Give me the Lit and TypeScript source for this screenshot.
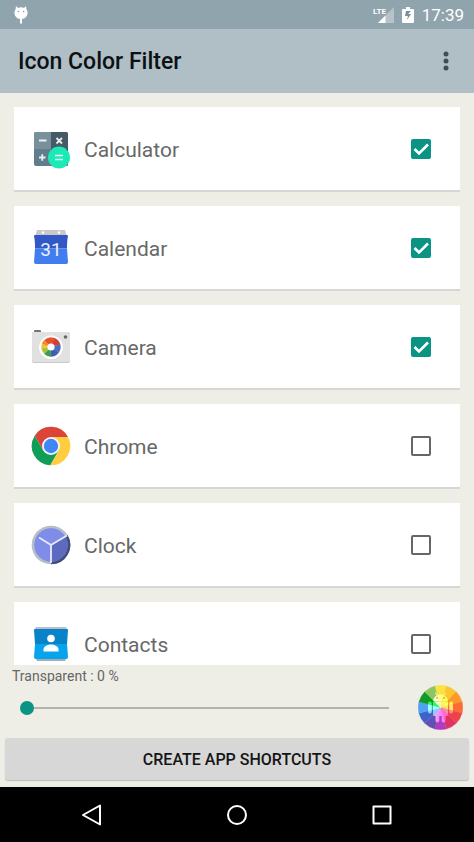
import { LitElement, html, svg, css, type TemplateResult } from "lit";
import { customElement, property, state } from "lit/decorators.js";

interface AppEntry {
  name: string;
  selected: boolean;
}

const wheelColors = [
  "#fde33f", "#fdc62f", "#fd9a27", "#fb6b33", "#ef4149", "#e0335f",
  "#ae3cc0", "#6450b4", "#3f62c8", "#4fa2f2", "#129a26", "#8cc663",
];

// Start angle, end angle and colour of each part of the camera lens.
const lensParts: [number, number, string][] = [
  [-45, 20, "#e8502c"], [20, 75, "#d23f35"], [75, 125, "#4a6fc0"], [125, 185, "#3f5fae"],
  [185, 225, "#3c9b4d"], [225, 262, "#a9c23c"], [262, 290, "#f6c330"], [290, 315, "#f08a2c"],
];

const point = (radius: number, degrees: number) => {
  const a = (degrees * Math.PI) / 180;
  return `${(radius * Math.sin(a)).toFixed(2)} ${(-radius * Math.cos(a)).toFixed(2)}`;
};

const wedge = (radius: number, from: number, to: number, color: string) =>
  svg`<path fill=${color} stroke=${color} stroke-width="0.300" d="M0 0L${point(radius, from)}A${radius} ${radius} 0 0 1 ${point(radius, to)}Z"/>`;

const icons: Record<string, TemplateResult> = {
  Calculator: svg`
    <rect x="3" y="3" width="34" height="34" rx="2" fill="#607d8b"/>
    <path d="M5 3H20V20H3V5A2 2 0 0 1 5 3Z" fill="#78909c"/>
    <path d="M20 3H35A2 2 0 0 1 37 5V20H20Z" fill="#455a64"/>
    <path d="M20 20H37V35A2 2 0 0 1 35 37H20Z" fill="#37474f"/>
    <path d="M8 11.500H15.500M8 28.500H14.500M11.250 25.250V31.750M25.500 9L31 14.500M31 9L25.500 14.500" stroke="#eceff1" stroke-width="1.800" fill="none"/>
    <circle cx="28" cy="28.500" r="11" fill="#1de9b6"/>
    <path d="M24 26.500H32M24 30.500H32" stroke="#d9fff5" stroke-width="1.500"/>`,
  Calendar: svg`
    <path d="M6 2H34L36 9H4Z" fill="#c8c8c8"/>
    <circle cx="12" cy="4.500" r="1.300" fill="#fff"/><circle cx="28" cy="4.500" r="1.300" fill="#fff"/>
    <path d="M3 8A1 1 0 0 1 4 7H36A1 1 0 0 1 37 8C36 13 36 17 36 20.500H4C4 17 4 13 3 8Z" fill="#3158c6"/>
    <path d="M4 20.500H36L37 34A2 2 0 0 1 35 36H5A2 2 0 0 1 3 34Z" fill="#427df0"/>
    <text x="20" y="28" text-anchor="middle" font-size="19" fill="#e9f0ff">31</text>`,
  Camera: svg`
    <path d="M4 3H9A1 1 0 0 1 10 4V7H3V4A1 1 0 0 1 4 3Z" fill="#757575"/>
    <rect x="1" y="5" width="38" height="31" rx="2" fill="#cacaca"/>
    <rect x="1" y="5" width="38" height="30" rx="2" fill="#e1e1e1"/>
    <circle cx="34.500" cy="10" r="1.800" fill="#666"/>
    <circle cx="20" cy="21" r="12" fill="#cfcfcf"/>
    <circle cx="20" cy="20.500" r="12" fill="#fff"/>
    <g transform="translate(20 20)">
      ${lensParts.map(([from, to, color]) => wedge(9.5, from, to, color))}
      <circle r="3.600" fill="#fff"/>
    </g>`,
  Chrome: svg`
    <g transform="translate(20 20)">
      <path d="M-16.300 -10.200A19.200 19.200 0 0 1 17 -9H0L-7.800 4.500Z" fill="#db4437"/>
      <path d="M-16.300 -10.200A19.200 19.200 0 0 0 -0.700 19.200L7.800 4.500L-7.800 4.500Z" fill="#0f9d58"/>
      <path d="M17 -9A19.200 19.200 0 0 1 -0.700 19.200L7.800 4.500L0 -9Z" fill="#ffcd40"/>
      <circle r="9" fill="#f4f6f8"/><circle r="7.200" fill="#4285f4"/>
    </g>`,
  Clock: svg`
    <circle cx="20" cy="20" r="19.300" fill="#b4bfc8"/>
    <path d="M36.500 10A19.300 19.300 0 0 1 20 39.300V20Z" fill="#3f4d78"/>
    <circle cx="20" cy="20" r="16.700" fill="#7f8ce8"/>
    <path d="M20 20L34.500 11.700A16.700 16.700 0 0 1 20 36.700Z" fill="#5c6bc0"/>
    <path d="M8 12.500L20 20L36 10.500M20 20V38" stroke="#e8ebfb" stroke-width="1.800" fill="none"/>`,
  Contacts: svg`
    <path d="M5 3H35L37 7H3Z" fill="#b9bfca"/><path d="M4 33H36L34 37H6Z" fill="#a4acb9"/>
    <path d="M3 6A1 1 0 0 1 4 5H36A1 1 0 0 1 37 6L36 20H4Z" fill="#0883ca"/>
    <path d="M4 20H36L37 33A2 2 0 0 1 35 35H5A2 2 0 0 1 3 33Z" fill="#07a4ee"/>
    <circle cx="20" cy="14.500" r="3.800" fill="#fff"/>
    <path d="M12.500 27.500V25.500C12.500 22 17 20.500 20 20.500S27.500 22 27.500 25.500V27.500Z" fill="#fff"/>`,
};

@customElement("status-bar")
class StatusBar extends LitElement {
  static styles = css`
    :host { display: flex; align-items: center; justify-content: space-between; height: 29px; padding: 0 10px 0 13px; background: #90a4ae; color: #fff; }
    .group { display: flex; align-items: center; gap: 8px; }
    .time { font-size: 17px; line-height: 20px; }
    .lte { font-size: 8px; font-weight: 700; }
    svg { display: block; }
  `;
  render() {
    return html`
      <svg width="16" height="20" viewBox="0 0 16 20" aria-hidden="true">
        <path d="M3 1L5 3A7 7 0 0 1 11 3L13 1L13.500 4.500A6.100 6.100 0 0 1 8 14A6.100 6.100 0 0 1 2.500 4.500Z" fill="#fff"/>
        <path d="M7 13H9V18.500H7Z" fill="#fff"/>
        <circle cx="5.300" cy="6.500" r="0.700" fill="#78909c"/><circle cx="10.700" cy="6.500" r="0.700" fill="#78909c"/>
      </svg>
      <div class="group">
        <svg width="21" height="18" viewBox="0 0 21 18" aria-hidden="true">
          <path d="M21 1V17H5Z" fill="#fff" opacity="0.350"/><path d="M12.500 9.500V17H5Z" fill="#fff"/>
          <text class="lte" x="0" y="8" fill="#fff">LTE</text>
        </svg>
        <svg width="12" height="18" viewBox="0 0 12 18" aria-hidden="true">
          <path d="M4 1H8V3H11A1 1 0 0 1 12 4V16A1 1 0 0 1 11 17H1A1 1 0 0 1 0 16V4A1 1 0 0 1 1 3H4Z" fill="#fff"/>
          <path d="M9 5H4L3 10H6L5 14L9 8H6Z" fill="#78909c"/>
        </svg>
        <span class="time">17:39</span>
      </div>`;
  }
}

@customElement("app-card")
class AppCard extends LitElement {
  @property() name = "";
  @property({ type: Boolean }) selected = false;
  static styles = css`
    :host { display: block; flex: none; }
    .card { display: flex; align-items: center; gap: 13px; height: 83px; padding: 0 29px 0 17px; background: #fff; border-bottom: 2px solid #d6d6d4; }
    .icon { flex: none; display: block; }
    .name { flex: 1; padding-top: 2px; font-size: 21px; line-height: 28px; color: #686868; }
    .box { appearance: none; flex: none; width: 20px; height: 20px; margin: 0; border: 2px solid #666; border-radius: 2px; background: #fff; }
    .box:checked { border-color: #0b9484; background: #0b9484 url('data:image/svg+xml,<svg xmlns="http://www.w3.org/2000/svg" viewBox="0 0 16 16"><path d="M1.500 8L6 12.500L15 3.500" fill="none" stroke="white" stroke-width="2.600"/></svg>') center / 16px 16px; }
  `;
  render() {
    return html`<label class="card">
      <svg class="icon" width="40" height="40" viewBox="0 0 40 40" aria-hidden="true">${icons[this.name]}</svg>
      <span class="name">${this.name}</span>
      <input class="box" type="checkbox" .checked=${this.selected}>
    </label>`;
  }
}

@customElement("app-root")
class AppRoot extends LitElement {
  @state() private transparency = 0;
  private apps: AppEntry[] = [
    { name: "Calculator", selected: true },
    { name: "Calendar", selected: true },
    { name: "Camera", selected: true },
    { name: "Chrome", selected: false },
    { name: "Clock", selected: false },
    { name: "Contacts", selected: false },
  ];
  static styles = css`
    :host { display: flex; flex-direction: column; height: 100vh; background: #eeede6; font-family: Roboto, "Liberation Sans", sans-serif; }
    button { border: 0; padding: 0; background: none; font: inherit; }
    svg { display: block; }
    .bar { display: flex; align-items: center; justify-content: space-between; height: 64px; padding: 0 16px 0 18px; background: #b0bec5; }
    .title { margin: 0; padding-top: 2px; font-size: 23px; font-weight: 500; line-height: 28px; color: #0c1114; }
    .list { flex: 1; min-height: 0; display: flex; flex-direction: column; gap: 14px; padding: 14px 14px 0; overflow: hidden; }
    .caption { display: block; padding: 2px 12px 0; font-size: 14px; line-height: 18px; color: #666; }
    .tint { display: flex; align-items: center; justify-content: space-between; gap: 29px; padding: 0 11px 8px 20px; }
    .slider { appearance: none; flex: 1; min-width: 0; height: 20px; margin: 0; background: linear-gradient(#b4b3ae, #b4b3ae) right center / calc(100% - 8px) 2px no-repeat; }
    .slider::-webkit-slider-thumb { appearance: none; width: 14px; height: 14px; border-radius: 50%; background: #0b9484; }
    .wheel { isolation: isolate; }
    .robot { mix-blend-mode: color-dodge; }
    .create { height: 42px; margin: 0 5px 7px; padding-top: 2px; border-radius: 3px; background: #d7d7d7; box-shadow: 0 1px 1px #bdbdb8; font-size: 16px; font-weight: 500; line-height: 20px; color: #151515; }
    .nav { display: flex; justify-content: space-around; align-items: center; height: 55px; padding: 0 20px; background: #000; }
  `;
  render() {
    return html`
      <status-bar></status-bar>
      <header class="bar">
        <h1 class="title">Icon Color Filter</h1>
        <button aria-label="More options">
          <svg width="24" height="24" viewBox="0 0 24 24" fill="#424e54"><circle cx="12" cy="5" r="2.500"/><circle cx="12" cy="12" r="2.500"/><circle cx="12" cy="19" r="2.500"/></svg>
        </button>
      </header>
      <main class="list">
        ${this.apps.map((app) => html`<app-card .name=${app.name} .selected=${app.selected}></app-card>`)}
      </main>
      <label class="caption" for="transparency">Transparent : ${this.transparency} %</label>
      <div class="tint">
        <input class="slider" id="transparency" type="range" min="0" max="100" .value=${String(this.transparency)}
          @input=${(e: Event) => { this.transparency = Number((e.target as HTMLInputElement).value); }}>
        <button aria-label="Pick color">
          <svg class="wheel" width="45" height="45" viewBox="-22.5 -22.5 45 45">
            ${wheelColors.map((color, i) => wedge(22.3, i * 30 - 15, i * 30 + 15, color))}
            <g class="robot" fill="#888">
              <path d="M-7.500 -6A7.500 7.500 0 0 1 -3.800 -12L-5.500 -14.500L-4.800 -15L-3 -12.500A8 8 0 0 1 3 -12.500L4.800 -15L5.500 -14.500L3.800 -12A7.500 7.500 0 0 1 7.500 -6Z"/>
              <path d="M-7.500 -5.500H7.500V7A1.500 1.500 0 0 1 6 8.500H5V13A1.900 1.900 0 0 1 1.200 13V8.500H-1.200V13A1.900 1.900 0 0 1 -5 13V8.500H-6A1.500 1.500 0 0 1 -7.500 7Z"/>
              <rect x="-12.500" y="-6" width="3.800" height="12" rx="1.900"/><rect x="8.700" y="-6" width="3.800" height="12" rx="1.900"/>
            </g>
            <circle cx="-3.500" cy="-9.500" r="0.900" fill="#c9ac28"/><circle cx="3.500" cy="-9.500" r="0.900" fill="#c9ac28"/>
          </svg>
        </button>
      </div>
      <button class="create">CREATE APP SHORTCUTS</button>
      <nav class="nav">
        <button aria-label="Back"><svg width="24" height="24" viewBox="0 0 24 24" fill="none" stroke="#fff" stroke-width="2" stroke-linejoin="round"><path d="M20 2.500V21.500L3 12Z"/></svg></button>
        <button aria-label="Home"><svg width="24" height="24" viewBox="0 0 24 24" fill="none" stroke="#fff" stroke-width="2"><circle cx="12" cy="12" r="9"/></svg></button>
        <button aria-label="Recent apps"><svg width="24" height="24" viewBox="0 0 24 24" fill="none" stroke="#fff" stroke-width="2" stroke-linejoin="round"><rect x="3.500" y="3.500" width="17" height="17"/></svg></button>
      </nav>`;
  }
}
